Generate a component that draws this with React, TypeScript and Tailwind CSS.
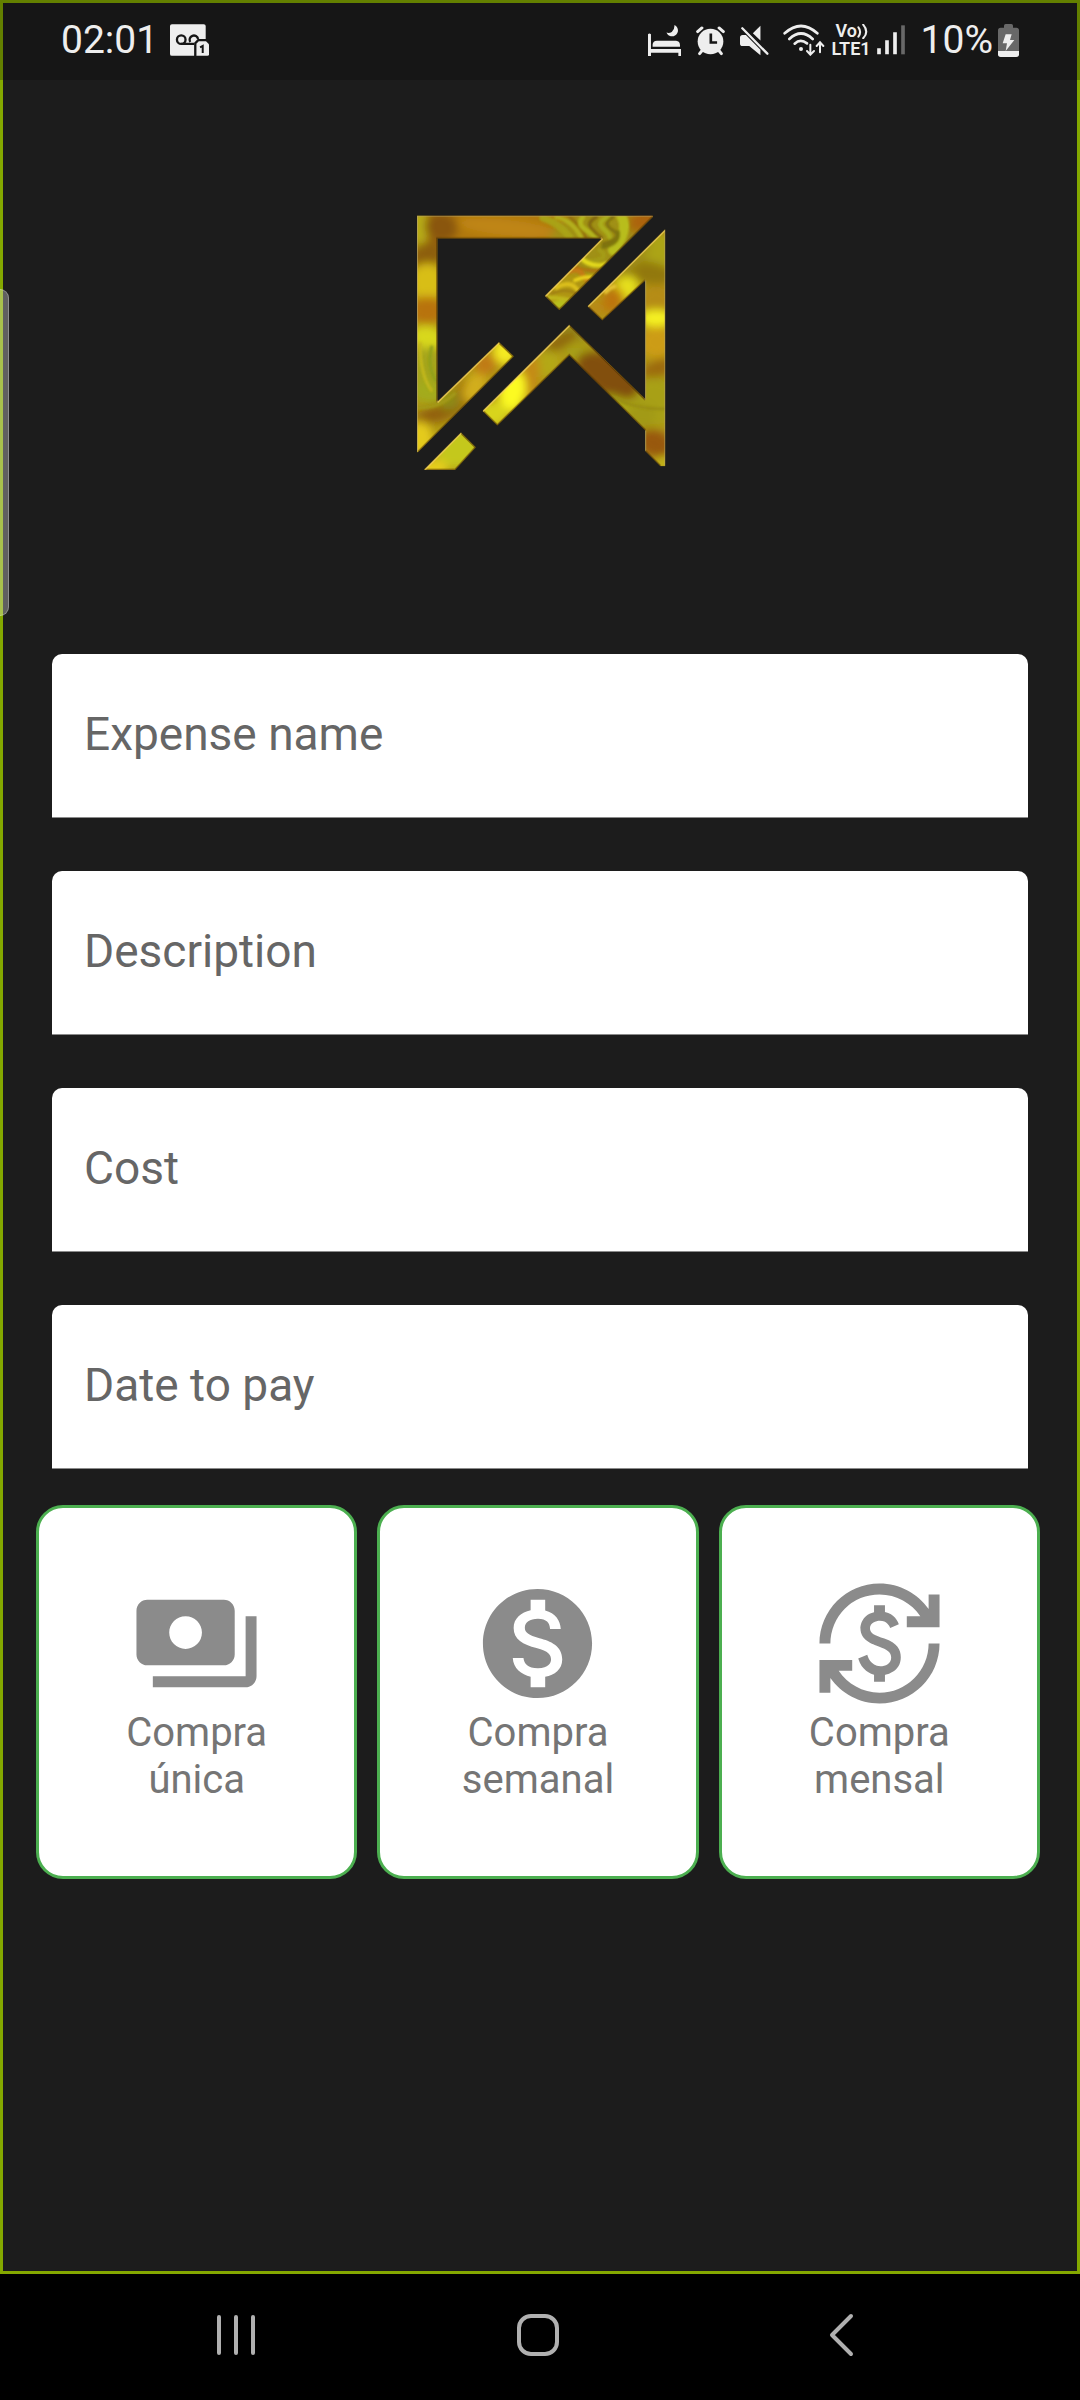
import type { ReactNode } from 'react';
import { MdCurrencyExchange, MdMonetizationOn, MdPayments } from 'react-icons/md';

const FRAME = 'M52 46H759V50L479 329L436 287L608 114H113V605L298 426L342 468L55 755H52Z';
const ARROW = 'M797 87V797H782L737 752V690L509 465L293 675L249 632L509 374L737 597V240L608 360L564 318Z';
const CHIP = 'M73 809L184 697L228 741L166 809Z';

// cx, cy, rx, ry, rotation, colour
type Blob = [number, number, number, number, number, string];

// Broad areas, softened strongly
const POOLS: Blob[] = [
  [300, 80, 520, 60, 0, '#b0780f'],
  [60, 80, 26, 60, 0, '#b8ae18'],
  [125, 80, 50, 46, 20, '#8a560a'],
  [320, 82, 150, 26, 6, '#c08612'],
  [83, 165, 52, 40, -30, '#8d5f0c'],
  [83, 245, 52, 56, 0, '#d8be18'],
  [83, 330, 52, 42, 0, '#b8730e'],
  [83, 412, 52, 36, 10, '#d8d81e'],
  [83, 500, 52, 60, -10, '#a5a51a'],
  [83, 575, 52, 34, 10, '#a3ab1a'],
  [115, 640, 76, 24, -15, '#91610c'],
  [60, 715, 40, 52, 0, '#e4ca1e'],
  [155, 600, 36, 26, -40, '#8e8a14'],
  [195, 580, 22, 46, -10, '#a0700c'],
  [225, 560, 30, 50, 30, '#d2ae1a'],
  [258, 492, 36, 30, -40, '#c07a12'],
  [315, 455, 34, 40, -20, '#f4ea24'],
  [770, 150, 70, 56, 0, '#aca416'],
  [735, 215, 90, 34, 10, '#92780f'],
  [770, 300, 52, 46, 0, '#b58c12'],
  [770, 354, 52, 26, 0, '#f6f220'],
  [770, 425, 52, 48, 0, '#cc9c12'],
  [775, 505, 52, 26, -20, '#9c6a0c'],
  [765, 605, 90, 74, 0, '#a8a016'],
  [765, 728, 52, 40, 20, '#98590c'],
  [792, 788, 24, 18, 0, '#c8bc1a'],
  [680, 262, 38, 34, -40, '#e6e01e'],
  [638, 300, 30, 40, 30, '#bd7410'],
  [586, 325, 30, 26, 0, '#b88a14'],
  [512, 392, 60, 24, 20, '#98901a'],
  [480, 425, 60, 20, -30, '#8e680e'],
  [550, 460, 60, 24, 10, '#a6a018'],
  [440, 490, 44, 40, -30, '#b4a818'],
  [392, 530, 26, 66, 10, '#c48a14'],
  [338, 572, 40, 64, 10, '#fcfa24'],
  [280, 640, 46, 38, 0, '#d8d41e'],
  [625, 525, 104, 58, 30, '#82500a'],
  [665, 612, 60, 18, 25, '#aaa818'],
  [725, 645, 44, 40, 0, '#a29a16'],
  [175, 745, 70, 60, 0, '#c4c81e'],
  [95, 805, 50, 30, 0, '#e6ce1e'],
  [600, 130, 150, 100, 0, '#a09016'],
  [730, 60, 50, 34, -30, '#ac640c'],
];

// Thin marbling strokes: path, width, colour
const VEINS: [string, number, string][] = [
  ['M430 52Q480 70 510 110', 22, '#a9a218'],
  ['M470 50Q520 62 545 112', 14, '#b4b01a'],
  ['M510 50Q545 80 560 114', 10, '#94700e'],
  ['M550 50Q530 70 560 90T590 114', 15, '#b4b61a'],
  ['M590 50Q560 66 575 84T605 112', 9, '#80640e'],
  ['M625 50Q590 66 610 84T630 110', 15, '#aaae1a'],
  ['M640 50Q605 70 640 90T610 130', 9, '#80700f'],
  ['M665 48Q690 90 640 150', 30, '#b8bd1c'],
  ['M655 95Q660 130 610 140', 12, '#7e7410'],
  ['M600 150Q630 170 590 180T545 160', 14, '#a49c16'],
  ['M545 175Q580 205 620 190', 13, '#e4da1e'],
  ['M520 195Q560 215 600 210', 8, '#b07010'],
  ['M500 215Q540 200 550 225T590 235', 15, '#c47a12'],
  ['M525 240Q560 225 590 232', 10, '#ecd41e'],
  ['M470 262Q510 240 530 265T560 262', 13, '#dcc01c'],
  ['M455 280Q490 262 530 278', 7, '#9e7c12'],
  ['M440 292Q480 290 510 300', 12, '#c0b81c'],
  ['M460 316Q490 305 500 320', 22, '#b8be1c'],
  ['M62 430Q60 520 95 570', 9, '#c4b81c'],
  ['M96 440Q82 500 108 540', 10, '#92a01a'],
  ['M55 622Q120 622 165 580', 10, '#a49a18'],
  ['M640 590Q710 630 797 625', 7, '#988c12'],
  ['M618 275Q630 262 645 258', 12, '#e6c434'],
];

function Logo() {
  return (
    <svg viewBox="49 44 753 768" className="h-64 w-[251px]" role="img" aria-label="Logo">
      <defs>
        <clipPath id="mark">
          <path d={FRAME} />
          <path d={ARROW} />
          <path d={CHIP} />
        </clipPath>
        <filter id="melt" x="-50%" y="-50%" width="200%" height="200%">
          <feGaussianBlur stdDeviation="13" />
        </filter>
        <filter id="soften" x="-50%" y="-50%" width="200%" height="200%">
          <feGaussianBlur stdDeviation="3" />
        </filter>
      </defs>
      <g clipPath="url(#mark)">
        <path d="M40 40H810V820H40Z" fill="#b09614" />
        <g filter="url(#melt)">
          {POOLS.map(([cx, cy, rx, ry, turn, fill], i) => (
            <ellipse key={i} cx={cx} cy={cy} rx={rx} ry={ry} fill={fill} transform={`rotate(${turn} ${cx} ${cy})`} />
          ))}
        </g>
        <g filter="url(#soften)" fill="none" strokeLinecap="round">
          {VEINS.map(([d, width, stroke]) => (
            <path key={d} d={d} strokeWidth={width} stroke={stroke} />
          ))}
        </g>
        <g fill="none" stroke="#4a2a04" strokeWidth="6" opacity="0.75">
          <path d="M759 50L479 329L436 287M113 605V114H608M342 468L55 755M298 426L342 468" />
          <path d="M782 797L737 752M737 690L509 465L293 675L249 632M509 374L737 597M737 240L608 360L564 318" />
          <path d="M184 697L228 741L166 809H73" />
        </g>
        <g fill="none" stroke="#f3cf63" strokeWidth="7" opacity="0.9">
          <path d="M608 114L436 287M113 605L298 426" />
          <path d="M797 87L564 318M509 374L249 632" />
          <path d="M184 697L73 809" />
        </g>
        <path d="M52 755V46H759M797 87V797M737 240V597M737 690V752" fill="none" stroke="#b8a468" strokeWidth="5" opacity="0.8" />
      </g>
    </svg>
  );
}

function VoicemailIcon() {
  return (
    <svg viewBox="510 72 118 96" className="h-8 w-[39px]" aria-hidden="true">
      <path d="M516 72H612Q618 72 618 78V117H594L583 128V168H516Q510 168 510 162V78Q510 72 516 72Z" fill="#eee" />
      <g fill="none" stroke="#161616" strokeWidth="7">
        <circle cx="544" cy="119" r="13" />
        <path d="M571 126A13 13 0 1 1 595 117M544 132H583" />
      </g>
      <path d="M597 124H619L628 133V163Q628 168 623 168H590V131Z" fill="#eee" />
      <path d="M601 142L609 138V159" fill="none" stroke="#161616" strokeWidth="6" />
    </svg>
  );
}

function BedIcon() {
  return (
    <svg viewBox="47 70 100 98" className="h-[33px] w-[33px]" fill="#eee" aria-hidden="true">
      <path d="M47 100Q51 96 56 100V145H147V166H139V156H56V166H47Z" />
      <path d="M61 138V132Q62 120 74 120H132Q144 121 144 134V138Z" />
      <path d="M127 72A18 18 0 1 1 103 95Q111 98 119 93Q128 86 127 72Z" />
    </svg>
  );
}

function AlarmIcon() {
  return (
    <svg viewBox="191 72 88 92" className="h-[31px] w-[29px]" aria-hidden="true">
      <g fill="none" stroke="#eee" strokeWidth="9" strokeLinecap="round">
        <path d="M196 91L209 80M274 91L261 80M209 149L202 158M261 149L268 158" />
      </g>
      <circle cx="235" cy="121" r="39" fill="#eee" />
      <path d="M236 97V124H255" fill="none" stroke="#161616" strokeWidth="8" />
    </svg>
  );
}

function MuteIcon() {
  return (
    <svg viewBox="328 72 88 92" className="h-[31px] w-[29px]" fill="#eee" aria-hidden="true">
      <path d="M390 73V118L367 96Z" />
      <path d="M336 101H346L390 146V163L356 135H336Q328 135 328 128V109Q328 101 336 101Z" />
      <path d="M335 81L411 158" fill="none" stroke="#eee" strokeWidth="7" strokeLinecap="round" />
    </svg>
  );
}

function WifiIcon() {
  return (
    <svg viewBox="456 70 126 96" className="h-8 w-[42px]" fill="none" stroke="#eee" strokeLinecap="round" aria-hidden="true">
      <path d="M461 98Q510 54 559 98M475 115Q510 82 545 115" strokeWidth="8" />
      <path d="M491 129Q508 113 528 128" strokeWidth="8" />
      <circle cx="510" cy="145" r="6" fill="#eee" stroke="none" />
      <path d="M538 132V160M528 151L538 162L549 151M567 155V127M557 136L567 125L577 136" strokeWidth="6" />
    </svg>
  );
}

function VolteIcon() {
  return (
    <span className="flex flex-col text-[18px] leading-[18px] font-semibold">
      <span className="flex items-center pl-1">
        Vo
        <svg viewBox="672 72 32 44" className="h-[15px] w-[11px]" fill="none" stroke="#eee" strokeWidth="6" strokeLinecap="round" aria-hidden="true">
          <path d="M676 82Q686 95 676 109M690 74Q708 95 690 114" />
        </svg>
      </span>
      <span>LTE1</span>
    </span>
  );
}

function SignalIcon() {
  return (
    <svg viewBox="741 74 84 90" className="h-[30px] w-7" fill="none" stroke="#eee" strokeWidth="11" aria-hidden="true">
      <path d="M747 144V162M771 120V162M795 96V162" />
      <path d="M819 75V162" stroke="#686868" />
    </svg>
  );
}

function BatteryIcon() {
  return (
    <svg viewBox="1104 69 63 99" className="h-[33px] w-[21px]" aria-hidden="true">
      <path d="M1122 80V74Q1122 69 1127 69H1144Q1149 69 1149 74V80H1159Q1167 80 1167 88V150H1104V88Q1104 80 1112 80Z" fill="#686868" />
      <path d="M1104 150H1167V160Q1167 168 1159 168H1112Q1104 168 1104 160Z" fill="#eee" />
      <path d="M1127 100H1145L1140 117H1153L1127 150L1131 127H1118Z" fill="#eee" />
    </svg>
  );
}

function StatusBar() {
  return (
    <header className="flex h-20 items-start justify-between border-x-[3px] border-t-[3px] border-[#638000] bg-[#161616] px-[58px] text-[#eee]">
      <div className="flex h-[74px] items-center gap-3">
        <time className="text-[39px] leading-[46px]">02:01</time>
        <VoicemailIcon />
      </div>
      <div className="flex h-[74px] items-center">
        <div className="flex items-center gap-[15px] pr-[14px]">
          <BedIcon />
          <AlarmIcon />
          <MuteIcon />
        </div>
        <div className="flex items-center gap-[6px] pr-4">
          <WifiIcon />
          <VolteIcon />
          <SignalIcon />
        </div>
        <div className="flex items-center gap-[5px]">
          <span className="text-[39px] leading-[46px]">10%</span>
          <BatteryIcon />
        </div>
      </div>
    </header>
  );
}

function Field({ label, name }: { label: string; name: string }) {
  return (
    <input
      type="text"
      name={name}
      aria-label={label}
      placeholder={label}
      className="h-[164px] w-full rounded-t-[10px] border-b border-[#8a8a8a] bg-white px-8 pb-1 text-[46px] text-[#222] outline-none placeholder:text-[#666]"
    />
  );
}

function Choice({ icon, children }: { icon: ReactNode; children: ReactNode }) {
  return (
    <button
      type="button"
      className="flex h-[374px] flex-col items-center justify-center rounded-[27px] border-[3px] border-[#4caf50] bg-white px-16 pb-[3px] text-[40px] leading-[47px] text-[#757575]"
    >
      <span className="text-[131px] text-[#8b8b8b]">{icon}</span>
      <span>{children}</span>
    </button>
  );
}

function NavButton({ label, children }: { label: string; children: ReactNode }) {
  return (
    <button type="button" aria-label={label} className="flex items-center justify-center pb-1">
      <svg viewBox="0 0 44 44" className="size-11" fill="none" stroke="#b0b0b0" strokeWidth="4" strokeLinecap="round" strokeLinejoin="round">
        {children}
      </svg>
    </button>
  );
}

export default function App() {
  return (
    <div className="relative flex min-h-screen flex-col bg-[#1c1c1c] font-['Roboto',sans-serif]">
      <StatusBar />
      <main className="flex flex-1 flex-col border-x-[3px] border-b-[3px] border-[#84a800] px-[33px]">
        <div className="flex justify-center pt-[135px] pb-[183px] pl-[2px]">
          <Logo />
        </div>
        <form className="flex flex-col" aria-label="New expense">
          <div className="flex flex-col gap-[53px] px-4">
            <Field label="Expense name" name="name" />
            <Field label="Description" name="description" />
            <Field label="Cost" name="cost" />
            <Field label="Date to pay" name="date" />
          </div>
          <div className="grid grid-cols-3 gap-5 pt-9 pr-1">
            <Choice icon={<MdPayments />}>Compra única</Choice>
            <Choice icon={<MdMonetizationOn />}>Compra semanal</Choice>
            <Choice icon={<MdCurrencyExchange />}>Compra mensal</Choice>
          </div>
        </form>
      </main>
      <nav className="grid h-[126px] grid-cols-3 bg-black pr-[89px] pl-[85px]">
        <NavButton label="Recent apps">
          <path d="M5 4V40M22 4V40M39 4V40" />
        </NavButton>
        <NavButton label="Home">
          <rect x="3" y="3" width="38" height="38" rx="12" />
        </NavButton>
        <NavButton label="Back">
          <path d="M33 3L14 22L33 41" />
        </NavButton>
      </nav>
      <div className="absolute top-[289px] left-0 h-[327px] w-[9px] rounded-r-[9px] border-y border-r border-white/30 bg-white/30" />
    </div>
  );
}
